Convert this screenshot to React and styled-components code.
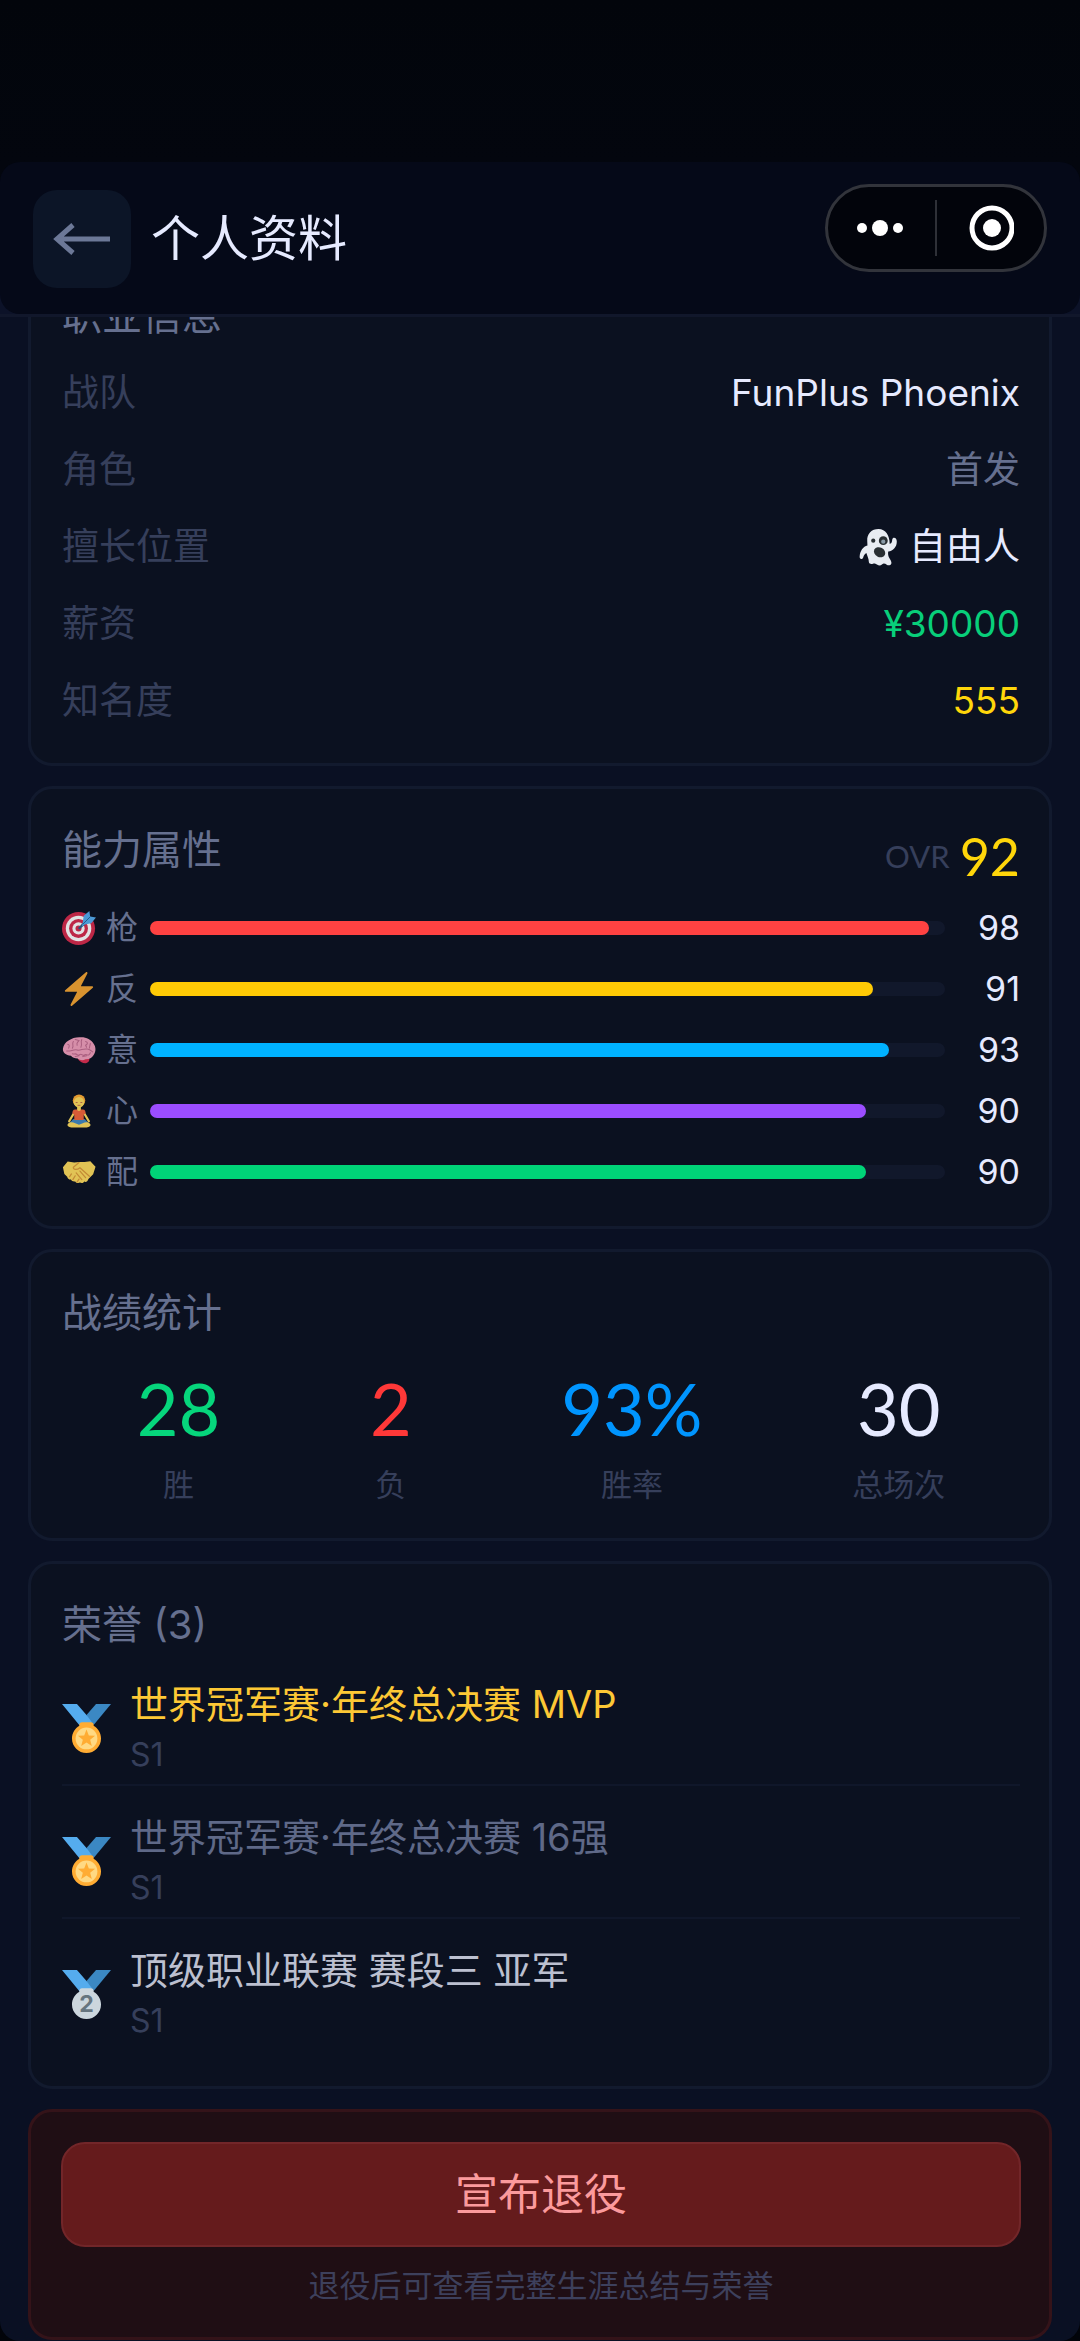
import React from 'react'
import styled, { createGlobalStyle } from 'styled-components'

const GlobalStyle = createGlobalStyle`
    * {
        box-sizing: border-box;
        margin: 0;
        padding: 0;
    }
    body {
        background-color: #02040a;
        font-family: Inter, "Noto Sans CJK SC", sans-serif;
        font-weight: 400;
        color: #e6eaff;
    }
`

const Page = styled.div`
    min-height: 100vh;
    overflow: hidden;
    border-radius: 0 0 20px 20px;
    background-color: #0a1023;
`
const StatusBar = styled.div`
    height: 162px;
    background: linear-gradient(#02050b, #03060e);
`
const HeaderBack = styled.header`
    background: linear-gradient(#03060e 50%, #0c1228 50%);
    border-bottom: 3px solid #11172b;
`
const Header = styled.div`
    display: flex;
    align-items: center;
    gap: 20px;
    padding: 28px 33px 26px;
    border-radius: 20px;
    background-color: #050918;
`
const BackButton = styled.button`
    display: flex;
    align-items: center;
    justify-content: center;
    width: 98px;
    height: 98px;
    border: none;
    border-radius: 24px;
    background-color: #0c1527;
    cursor: pointer;
`
const PageTitle = styled.h1`
    flex: 1;
    font-size: 49px;
    font-weight: 400;
    line-height: 64px;
`
const Capsule = styled.div`
    display: flex;
    align-items: center;
    align-self: flex-start;
    height: 88px;
    margin-top: -6px;
    border: 3px solid #32343b;
    border-radius: 44px;
    background-color: #02040b;
`
const CapsuleButton = styled.button`
    display: flex;
    align-items: center;
    justify-content: center;
    width: 107px;
    height: 82px;
    border: none;
    background: transparent;
    cursor: pointer;
`
const CapsuleLine = styled.span`
    width: 2px;
    height: 56px;
    background-color: #2e3037;
`

const Main = styled.main`
    overflow: hidden;
`
// the list is scrolled a little under the header
const CardList = styled.div`
    display: flex;
    flex-direction: column;
    gap: 20px;
    margin-top: -65px;
    padding: 0 28px;
`
const Card = styled.section`
    padding: 33px 29px 31px 31px;
    border: 3px solid #121a2e;
    border-radius: 24px;
    background-color: #0b1120;
`
const CardTitle = styled.h2`
    font-size: 40px;
    font-weight: 400;
    line-height: 56px;
    color: #66708f;
`

const InfoList = styled.dl`
    display: flex;
    flex-direction: column;
    gap: 14px;
    margin-top: 17px;
`
const InfoRow = styled.div`
    display: flex;
    align-items: center;
    justify-content: space-between;
    font-size: 37px;
    line-height: 63px;
`
const InfoLabel = styled.dt`
    color: #363f5b;
`
const InfoValue = styled.dd`
    display: flex;
    align-items: center;
    gap: 12px;
    color: ${({ $color }) => $color || '#e6eaff'};
`

const CardHead = styled.div`
    display: flex;
    align-items: flex-start;
    justify-content: space-between;
`
const Overall = styled.div`
    display: flex;
    align-items: center;
    gap: 10px;
    font-family: Lato, sans-serif;
    font-size: 31px;
    line-height: 68px;
    color: #363f5b;
`
const OverallValue = styled.strong`
    font-size: 52px;
    font-weight: 400;
    color: #ffd60a;
`
const AbilityList = styled.ul`
    display: flex;
    flex-direction: column;
    gap: 15px;
    margin-top: 15px;
    list-style: none;
`
const AbilityRow = styled.li`
    display: flex;
    align-items: center;
    height: 46px;
`
const AbilityName = styled.span`
    display: flex;
    align-items: center;
    gap: 10px;
    width: 88px;
    font-size: 32px;
    line-height: 46px;
    color: #66708f;
`
const Track = styled.div`
    flex: 1;
    height: 14px;
    border-radius: 7px;
    background-color: #11182b;
`
const Fill = styled.div`
    height: 14px;
    border-radius: 7px;
    background-color: ${({ $color }) => $color};
`
const AbilityValue = styled.span`
    width: 75px;
    font-size: 34px;
    line-height: 46px;
    text-align: right;
`

const StatRow = styled.div`
    display: flex;
    justify-content: space-around;
    margin-top: 27px;
`
const Stat = styled.div`
    display: flex;
    flex-direction: column;
    align-items: center;
    gap: 15px;
`
const StatValue = styled.span`
    font-family: Lato, sans-serif;
    font-size: 72px;
    line-height: 80px;
    color: ${({ $color }) => $color};
`
const StatLabel = styled.span`
    font-size: 31px;
    line-height: 44px;
    color: #363f5b;
`

const HonorList = styled.ul`
    list-style: none;
`
const HonorRow = styled.li`
    display: flex;
    align-items: center;
    gap: 19px;
    padding: 24px 0 5px;
    border-bottom: 2px solid #10172a;

    &:last-child {
        padding-bottom: 10px;
        border-bottom: none;
    }
`
const HonorName = styled.p`
    font-size: 38px;
    line-height: 54px;
    color: ${({ $color }) => $color};
`
const HonorSeason = styled.p`
    font-size: 32px;
    line-height: 48px;
    color: #363f5b;
`

const DangerCard = styled(Card)`
    padding: 30px 28px 29px 30px;
    border-color: #341319;
    background-color: #1f0e14;
`
const RetireButton = styled.button`
    display: block;
    width: 100%;
    height: 105px;
    padding-bottom: 8px;
    border: 2px solid #722629;
    border-radius: 24px;
    background-color: #651b1c;
    font-family: inherit;
    font-size: 43px;
    color: #fb9a9c;
    cursor: pointer;
`
const RetireNote = styled.p`
    margin-top: 17px;
    font-size: 31px;
    line-height: 44px;
    text-align: center;
    color: #3d405c;
`

const Emoji = styled.svg`
    flex: none;
    width: ${({ $size }) => $size}px;
    height: ${({ $size }) => $size}px;
    opacity: ${({ $dim }) => ($dim ? 0.88 : 1)};
`

const Ghost = () => (
    <Emoji $size={38} viewBox="0 0 36 36" aria-hidden="true">
        <path fill="#e8ecf2" d="M18.500 1C12 1 7.500 5.500 7.800 12l.2 4.500C4 17.500.8 21.500.6 27.500c0 2.300 2.600 2.500 3.300.6.700-2.200 1.600-3.700 3.100-4.300.9 3.200 2.300 5.200 2.300 8.200 0 1.900 2.200 2.500 3.900 1.900 1.900-.6 2.600.1 4.200 1 1.700.9 3.200.6 4.600-.6 1.500-1.200 2.800-.3 4.300.5 1.500.9 3.600.6 4.300-1 .8-1.900-1.300-4-2.400-6.400-.7-1.600-.8-3.400-.5-5.100 4.600-.5 8.300-4.500 8.100-9.800-.1-3.600-3.900-4.200-4.300-1.600-.3 1.600-.1 3.500-2.400 4.200-.1-8-3.800-14.100-10.600-14.100z" />
        <circle cx="13.500" cy="12" r="2" fill="#292f33" />
        <circle cx="23" cy="12" r="4.200" fill="#292f33" />
        <circle cx="23" cy="13" r="2" fill="#8899a6" />
        <ellipse cx="19.500" cy="23" rx="5.600" ry="4.500" fill="#292f33" transform="rotate(28 19.500 23)" />
    </Emoji>
)

const Target = () => (
    <Emoji $size={34} $dim viewBox="0 0 36 36" aria-hidden="true">
        <circle cx="17.500" cy="18.500" r="17.500" fill="#d62b4c" />
        <circle cx="17.500" cy="18.500" r="13.500" fill="#fff" />
        <circle cx="17.500" cy="18.500" r="10" fill="#d62b4c" />
        <circle cx="17.500" cy="18.500" r="6.500" fill="#fff" />
        <circle cx="17.500" cy="18.500" r="3.200" fill="#d62b4c" />
        <path fill="#2a5f8e" d="M17 18l9-10 2.500 2.500L18.500 19.500z" />
        <path fill="#55acee" d="M22 12l1-7 6-5 .8 5.800L36 7l-5 6-7 1.200-3 2.300z" />
        <path stroke="#269" strokeWidth="1" d="M22 14l8-8" />
    </Emoji>
)

const Bolt = () => (
    <Emoji $size={34} $dim viewBox="0 0 36 36" aria-hidden="true">
        <path fill="#f6a632" d="M32.938 15.651C32.792 15.260 32.418 15 32 15H19.925L26.890 1.458c.219-.426.106-.947-.271-1.243C26.437.071 26.218 0 26 0c-.233 0-.466.082-.653.243L18 6.588 3.347 19.243c-.316.273-.430.714-.284 1.105S3.582 21 4 21h12.075L9.110 34.542c-.219.426-.106.947.271 1.243.182.144.401.215.619.215.233 0 .466-.082.653-.243L18 29.412l14.653-12.655c.317-.273.430-.714.285-1.106z" />
    </Emoji>
)

const Brain = () => (
    <Emoji $size={34} $dim viewBox="0 0 36 36" aria-hidden="true">
        <path fill="#dd2e50" d="M17 28c4-2 10-3 11.500-1.500C30 28 28 32 25 32c-3 .2-5.500-1.500-8-4z" />
        <path fill="#f2a0bd" d="M1 16.500C1.500 13 3.500 10 7 8c3.500-3 9-4 13.500-3.500C26 4.500 31 7 33.500 11.500c2.500 3.500 2.500 8 .500 11-1.500 3.500-5 5.500-9 5.300-3 1.700-6 1.200-8.500-.8-3-.2-5.500-1-7-3C4 24 .500 20.500 1 16.500z" />
        <g fill="none" stroke="#c06a8d" strokeWidth="1.100" strokeLinecap="round">
            <path d="M5 19c4 1 7-2 11-1s6-2 11-1c3 .5 4 2 5.500 3" />
            <path d="M6 12c2 0 2 2 1 4M12 9c-2 3 1 4-1 7M14 7l4 1c-1 2-3 2-2 5M21 7c-2 3 1 4-1 8M25 9c3 1 2 3 0 4l1 2M30 11l-1 5" />
            <path d="M11 22c2 1 3-1 5 1s3-2 5 0 3-1 5 0 3 0 4-2M14 25l4-1M22 25l4-1" />
        </g>
    </Emoji>
)

const Lotus = () => (
    <Emoji $size={34} $dim viewBox="0 0 36 36" aria-hidden="true">
        <path fill="#4289c1" d="M12 26.500h12l5 5-11 2.500-11-2.500z" />
        <path fill="#ffdc5d" d="M6 32c2-2.500 5-2.500 8-1l4 1.500 4-1.500c3-1.500 6-1.500 8 1 1 2-2 3.500-5 3.500H11c-3 0-6-1.500-5-3.500z" />
        <path fill="none" stroke="#ffdc5d" strokeWidth="2.200" strokeLinecap="round" strokeLinejoin="round" d="M12.500 20.500L7.500 29M23.500 20.500l5 8.500" />
        <path fill="#f4663b" d="M14 16.500h8c2.500 0 3 2 3 4l-2 1.500v5.500H13V22l-2-1.500c0-2 .500-4 3-4z" />
        <path fill="#ffdc5d" d="M16 12h4v4.500c0 2-4 2-4 0z" />
        <circle cx="18" cy="7" r="6.600" fill="#ffac33" />
        <ellipse cx="18" cy="8.700" rx="5.500" ry="5.500" fill="#ffdc5d" />
        <path fill="none" stroke="#c1694f" strokeWidth="1" d="M14.500 9h2M19.500 9h2M16.500 12h3" />
    </Emoji>
)

const Handshake = () => (
    <Emoji $size={34} $dim viewBox="0 0 36 36" aria-hidden="true">
        <path fill="#ffdc5d" d="M1 13l5-6 7 1 5-.5 6 0 6-1 5.500 6-2.500 8-5 5c-1 3-3 3.500-4.500 2.500-1 2-3 2-4.500 1.200-2 1-4 .300-5-1.200-2 .5-4-.5-4.500-2-2 .3-3.500-1-4-3L2.500 20z" />
        <g fill="none" stroke="#dd9b38" strokeWidth="1.300" strokeLinecap="round" strokeLinejoin="round">
            <path d="M18 8l-6 5c0 3 4 3 7 .500l10 9" />
            <path d="M19 17l6 7M15 19l6 7M8 23l2-3M11.500 26l2.500-4M16 28.500l2-3" />
        </g>
    </Emoji>
)

const Medal = ({ silver }) => (
    <Emoji $size={49} viewBox="0 0 36 36" aria-hidden="true">
        <path fill="#55acee" d="M18 8l-7-8H0l14 17 11.521-4.750z" />
        <path fill="#3b88c3" d="M25 0l-7 8 5.390 7.312 1.227-1.489L36 0z" />
        <path fill={silver ? '#ccd6dd' : '#ffac33'} d="M23.205 16.026c.080-.217.131-.448.131-.693 0-1.104-.896-2-2-2h-6.667c-1.104 0-2 .896-2 2 0 .245.050.476.131.693-3.258 1.826-5.464 5.307-5.464 9.307C7.335 31.224 12.111 36 18.002 36c5.891 0 10.667-4.776 10.667-10.667 0-4-2.206-7.481-5.464-9.307z" />
        {silver ? (
            <text x="18" y="31" textAnchor="middle" fontSize="17" fontWeight="700" fill="#66757f">2</text>
        ) : (
            <>
                <circle cx="18" cy="25.333" r="8" fill="#ffd983" />
                <path fill="#ffac33" d="M18 18.800l1.700 4.300 4.600.300-3.600 2.900 1.200 4.500-3.900-2.500-3.900 2.500 1.200-4.500-3.600-2.900 4.600-.300z" />
            </>
        )}
    </Emoji>
)

const abilities = [
    { name: '枪', icon: <Target />, value: 98, color: '#ff4242' },
    { name: '反', icon: <Bolt />, value: 91, color: '#ffca05' },
    { name: '意', icon: <Brain />, value: 93, color: '#00b2ff' },
    { name: '心', icon: <Lotus />, value: 90, color: '#9b4dff' },
    { name: '配', icon: <Handshake />, value: 90, color: '#00d478' },
]

const stats = [
    { label: '胜', value: '28', color: '#06d67c' },
    { label: '负', value: '2', color: '#ff3838' },
    { label: '胜率', value: '93%', color: '#0095ff' },
    { label: '总场次', value: '30', color: '#e6eaff' },
]

const honors = [
    { name: '世界冠军赛·年终总决赛 MVP', season: 'S1', color: '#fdc835' },
    { name: '世界冠军赛·年终总决赛 16强', season: 'S1', color: '#5f6988' },
    { name: '顶级职业联赛 赛段三 亚军', season: 'S1', color: '#bcc0d0', silver: true },
]

const App = () => {
    return (
        <>
            <GlobalStyle />
            <Page>
                <StatusBar />
                <HeaderBack>
                    <Header>
                        <BackButton aria-label="返回">
                            <svg width="58" height="32" viewBox="0 0 58 32" fill="none" stroke="#6c7897" strokeWidth="5">
                                <path d="M57 16H4M20 2L4 16l16 14" />
                            </svg>
                        </BackButton>
                        <PageTitle>个人资料</PageTitle>
                        <Capsule>
                            <CapsuleButton aria-label="更多">
                                <svg width="52" height="18" viewBox="0 0 52 18" fill="#fff">
                                    <circle cx="6" cy="9" r="5" />
                                    <circle cx="24" cy="9" r="8" />
                                    <circle cx="42" cy="9" r="5" />
                                </svg>
                            </CapsuleButton>
                            <CapsuleLine />
                            <CapsuleButton aria-label="关闭">
                                <svg width="46" height="46" viewBox="0 0 46 46">
                                    <circle cx="24" cy="23" r="20" fill="none" stroke="#fff" strokeWidth="5" />
                                    <circle cx="24" cy="23" r="9" fill="#fff" />
                                </svg>
                            </CapsuleButton>
                        </Capsule>
                    </Header>
                </HeaderBack>

                <Main>
                    <CardList>
                        <Card>
                            <CardTitle>职业信息</CardTitle>
                            <InfoList>
                                <InfoRow>
                                    <InfoLabel>战队</InfoLabel>
                                    <InfoValue>FunPlus Phoenix</InfoValue>
                                </InfoRow>
                                <InfoRow>
                                    <InfoLabel>角色</InfoLabel>
                                    <InfoValue $color="#66708f">首发</InfoValue>
                                </InfoRow>
                                <InfoRow>
                                    <InfoLabel>擅长位置</InfoLabel>
                                    <InfoValue><Ghost />自由人</InfoValue>
                                </InfoRow>
                                <InfoRow>
                                    <InfoLabel>薪资</InfoLabel>
                                    <InfoValue $color="#08cf7a">¥30000</InfoValue>
                                </InfoRow>
                                <InfoRow>
                                    <InfoLabel>知名度</InfoLabel>
                                    <InfoValue $color="#ffd60a">555</InfoValue>
                                </InfoRow>
                            </InfoList>
                        </Card>

                        <Card>
                            <CardHead>
                                <CardTitle>能力属性</CardTitle>
                                <Overall>
                                    OVR
                                    <OverallValue>92</OverallValue>
                                </Overall>
                            </CardHead>
                            <AbilityList>
                                {abilities.map((item) => (
                                    <AbilityRow key={item.name}>
                                        <AbilityName>{item.icon}{item.name}</AbilityName>
                                        <Track>
                                            <Fill $color={item.color} style={{ width: `${item.value}%` }} />
                                        </Track>
                                        <AbilityValue>{item.value}</AbilityValue>
                                    </AbilityRow>
                                ))}
                            </AbilityList>
                        </Card>

                        <Card>
                            <CardTitle>战绩统计</CardTitle>
                            <StatRow>
                                {stats.map((item) => (
                                    <Stat key={item.label}>
                                        <StatValue $color={item.color}>{item.value}</StatValue>
                                        <StatLabel>{item.label}</StatLabel>
                                    </Stat>
                                ))}
                            </StatRow>
                        </Card>

                        <Card>
                            <CardTitle>荣誉 ({honors.length})</CardTitle>
                            <HonorList>
                                {honors.map((item) => (
                                    <HonorRow key={item.name}>
                                        <Medal silver={item.silver} />
                                        <div>
                                            <HonorName $color={item.color}>{item.name}</HonorName>
                                            <HonorSeason>{item.season}</HonorSeason>
                                        </div>
                                    </HonorRow>
                                ))}
                            </HonorList>
                        </Card>

                        <DangerCard>
                            <RetireButton>宣布退役</RetireButton>
                            <RetireNote>退役后可查看完整生涯总结与荣誉</RetireNote>
                        </DangerCard>
                    </CardList>
                </Main>
            </Page>
        </>
    )
}

export default App
